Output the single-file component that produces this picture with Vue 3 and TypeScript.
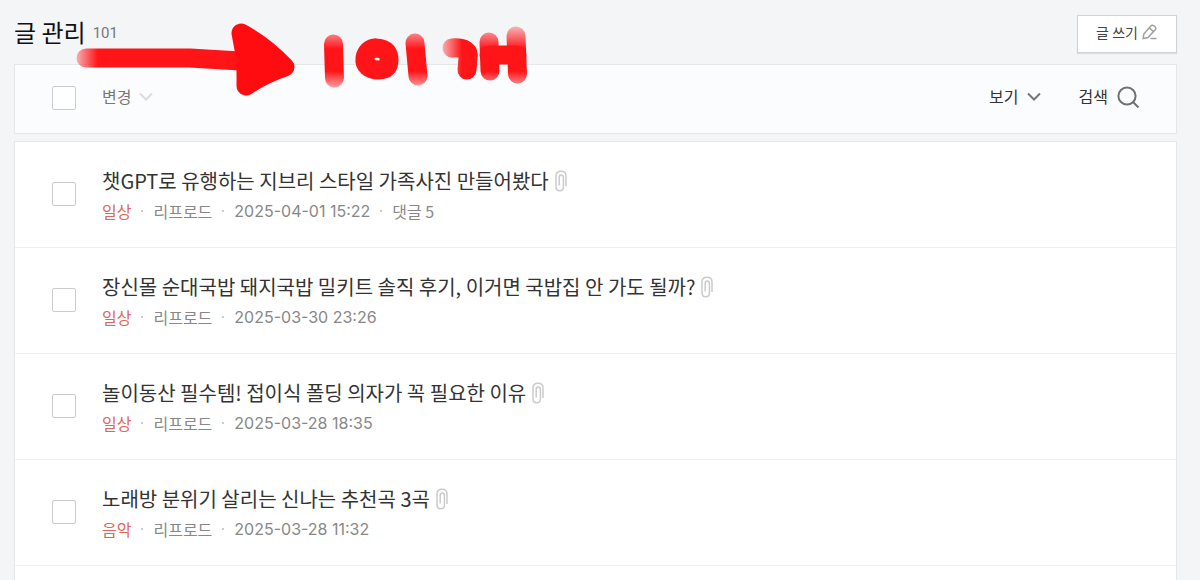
<script setup lang="ts">
import { ref } from 'vue'

interface Post {
  id: number
  title: string
  category: string
  author: string
  date: string
  comments?: number
}

const total = 101
const posts: Post[] = [
  { id: 1, title: '챗GPT로 유행하는 지브리 스타일 가족사진 만들어봤다', category: '일상', author: '리프로드', date: '2025-04-01 15:22', comments: 5 },
  { id: 2, title: '장신몰 순대국밥 돼지국밥 밀키트 솔직 후기, 이거면 국밥집 안 가도 될까?', category: '일상', author: '리프로드', date: '2025-03-30 23:26' },
  { id: 3, title: '놀이동산 필수템! 접이식 폴딩 의자가 꼭 필요한 이유', category: '일상', author: '리프로드', date: '2025-03-28 18:35' },
  { id: 4, title: '노래방 분위기 살리는 신나는 추천곡 3곡', category: '음악', author: '리프로드', date: '2025-03-28 11:32' },
]
const selected = ref<number[]>([])

function toggleAll(event: Event) {
  const box = event.target as HTMLInputElement
  selected.value = box.checked ? posts.map((post) => post.id) : []
}
</script>

<template>
  <main class="page">
    <header class="head">
      <h1 class="heading">글 관리</h1>
      <span class="total">{{ total }}</span>
      <button class="write" type="button">
        글 쓰기
        <svg width="16" height="16" viewBox="0 0 16 16" fill="none" stroke="#a0a0a0" stroke-width="1.5" aria-hidden="true">
          <path d="M1.2 14.5 L1.8 10 L8.8 2 Q10.3 .5 12 1.8 L13 2.7 Q14.5 4.2 13.2 5.8 L6 13.5 Z M7.5 4 L11.3 7.6" />
          <path d="M8.5 14.5 H14.5" />
        </svg>
      </button>
    </header>

    <section class="toolbar">
      <input class="check" type="checkbox" aria-label="전체 선택" @change="toggleAll" />
      <button class="tool change" type="button">
        변경
        <svg width="14" height="10" viewBox="0 0 14 10" fill="none" stroke="#dcdcdc" stroke-width="2" aria-hidden="true"><path d="M1 1.5 L7 7.5 L13 1.5" /></svg>
      </button>
      <button class="tool view" type="button">
        보기
        <svg width="14" height="10" viewBox="0 0 14 10" fill="none" stroke="#777" stroke-width="2" aria-hidden="true"><path d="M1 1.5 L7 7.5 L13 1.5" /></svg>
      </button>
      <button class="tool search" type="button">
        검색
        <svg width="24" height="24" viewBox="0 0 24 24" fill="none" stroke="#707070" stroke-width="2" aria-hidden="true"><circle cx="11" cy="11" r="8.6" /><path d="M17 17 L22.5 22.5" /></svg>
      </button>
    </section>

    <ul class="list">
      <li v-for="post in posts" :key="post.id" class="row">
        <input v-model="selected" class="check" type="checkbox" :value="post.id" :aria-label="post.title" />
        <div class="body">
          <div class="line">
            <a class="title" href="#">{{ post.title }}</a>
            <svg width="12" height="22" viewBox="0 0 12 22" fill="none" stroke="#cbcbcb" stroke-width="1.5" role="img" aria-label="첨부">
              <path d="M11 16 V6 Q11 1.2 6 1.2 T1 6 V17 Q1 20.8 4.8 20.8 T8.400 17 V7.500 Q8.400 5 6.300 5 T4.200 7.500 V15.500" />
            </svg>
          </div>
          <div class="meta">
            <a class="category" href="#">{{ post.category }}</a>
            <span class="dot"></span>
            <span>{{ post.author }}</span>
            <span class="dot"></span>
            <time class="date">{{ post.date }}</time>
            <template v-if="post.comments">
              <span class="dot"></span>
              <a class="comments" href="#">댓글 {{ post.comments }}</a>
            </template>
          </div>
        </div>
      </li>
      <li class="row"></li>
    </ul>

    <svg class="marker" width="540" height="110" viewBox="0 0 540 110" fill="none" stroke="#ff1418" stroke-width="19" stroke-linecap="round" stroke-linejoin="round" aria-hidden="true">
      <defs>
        <linearGradient id="fadeX" gradientUnits="userSpaceOnUse" x1="76" y1="0" x2="98" y2="0">
          <stop offset="0" stop-color="#ff1418" stop-opacity=".3" /><stop offset="1" stop-color="#ff1418" />
        </linearGradient>
        <linearGradient id="fadeY" gradientUnits="userSpaceOnUse" x1="0" y1="27" x2="0" y2="90">
          <stop offset="0" stop-color="#ff1418" stop-opacity=".3" /><stop offset=".35" stop-color="#ff1418" /><stop offset=".7" stop-color="#ff1418" /><stop offset="1" stop-color="#ff1418" stop-opacity=".3" />
        </linearGradient>
        <linearGradient id="fadeHook" gradientUnits="userSpaceOnUse" x1="442" y1="0" x2="462" y2="0">
          <stop offset="0" stop-color="#ff1418" stop-opacity=".3" /><stop offset="1" stop-color="#ff1418" />
        </linearGradient>
      </defs>
      <path d="M86 58 H190 L240 61" stroke="url(#fadeX)" />
      <path d="M241 33 Q264 45 285 67 Q264 74 246 86 L246 60 Z" fill="#ff0c10" stroke="#ff0c10" />
      <path d="M333.5 44 L334.5 78 M415 43 L418 76 M489 42 L490 71 M516 36 L517.5 74" stroke="url(#fadeY)" />
      <path d="M489 55 H517" />
      <path d="M375 48 C388 48 389 55 389 60 C389 67 386 70 379 70 C369 70 364 65 365 58 C366 52 370 48 376 48" />
      <path d="M452 48 C464 47 470 51 468 58 L467 70" stroke="url(#fadeHook)" />
    </svg>
  </main>
</template>

<style>
body {
  margin: 0;
  background: #f3f5f7;
}
</style>

<style scoped>
.page {
  position: relative;
  height: 100vh;
  overflow: hidden;
  padding: 0 23px 0 14px;
  font-family: "Noto Sans CJK KR", sans-serif;
  color: #333;
}
.page, .page * {
  box-sizing: border-box;
}
.head {
  display: flex;
  align-items: center;
  height: 64px;
}
.heading {
  margin: 0;
  font-size: 24px;
  line-height: 32px;
  font-weight: 400;
  color: #111;
}
.total {
  margin-left: 7px;
  padding-top: 2px;
  font: 15px/24px Roboto, sans-serif;
  color: #777;
}
.write {
  display: flex;
  align-items: center;
  align-self: flex-end;
  justify-content: center;
  gap: 4px;
  width: 100px;
  height: 38px;
  margin: 0 0 11px auto;
  padding: 0 0 4px;
  border: 1px solid #d0d2d4;
  background: #fff;
  box-shadow: 0 1px 1px #dcdee0;
  font: 14px/24px "Noto Sans CJK KR", sans-serif;
  color: #444;
}
.toolbar {
  display: flex;
  align-items: center;
  height: 70px;
  padding: 0 36px 2px 37px;
  border: 1px solid #e5e7e9;
  background: #fbfcfe;
}
.check {
  appearance: none;
  flex: none;
  width: 24px;
  height: 24px;
  margin: 0;
  border: 1px solid #ccc;
  border-radius: 2px;
  background: #fff;
}
.check:checked {
  background: #777;
}
.tool {
  display: flex;
  align-items: center;
  gap: 8px;
  padding: 0 0 4px;
  border: 0;
  background: none;
  font: 16px/24px "Noto Sans CJK KR", sans-serif;
  color: #333;
}
.tool svg {
  margin-top: 2px;
}
.change {
  margin-left: 26px;
  color: #777;
}
.view {
  margin-left: auto;
}
.search {
  margin-left: 38px;
}
.list {
  margin: 7px 0 0;
  padding: 0;
  list-style: none;
  border: 1px solid #e5e7e9;
  background: #fff;
}
.row {
  display: flex;
  align-items: center;
  height: 106px;
  padding: 0 37px 1px;
  border-bottom: 1px solid #eff0f1;
}
.body {
  margin-left: 26px;
  padding-top: 1px;
}
.line {
  display: flex;
  align-items: center;
  gap: 6px;
}
.title {
  font-size: 20px;
  line-height: 32px;
  color: #333;
  text-decoration: none;
}
.meta {
  display: flex;
  align-items: center;
  font-size: 16px;
  line-height: 28px;
  color: #888;
}
.category {
  color: #e0665c;
  text-decoration: none;
}
.comments {
  color: #888;
  text-decoration: none;
}
.date {
  font-family: Inter, sans-serif;
}
.dot {
  width: 2px;
  height: 2px;
  margin: 0 10px;
  background: #ccc;
}
.marker {
  position: absolute;
  top: 0;
  left: 0;
  pointer-events: none;
}
</style>
